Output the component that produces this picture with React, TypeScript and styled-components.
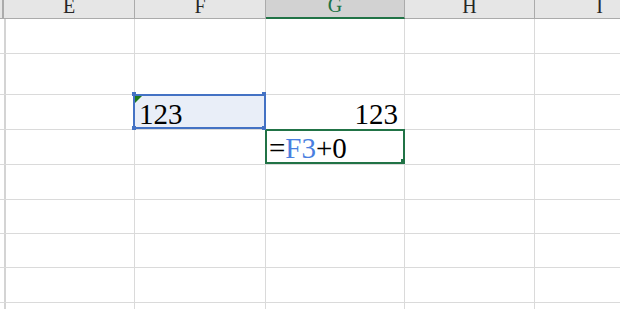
import React from 'react';
import styled, { createGlobalStyle, css } from 'styled-components';

const GlobalStyle = createGlobalStyle`
  html, body {
    margin: 0;
    padding: 0;
    background: #ffffff;
    overflow: hidden;
  }
  * {
    box-sizing: border-box;
  }
`;

const SERIF = `'Liberation Serif', 'DejaVu Serif', 'Times New Roman', serif`;

const COLUMNS = [
  { key: 'D', width: 4 },
  { key: 'E', width: 131 },
  { key: 'F', width: 131 },
  { key: 'G', width: 139 },
  { key: 'H', width: 130 },
  { key: 'I', width: 130 },
];

const ROW_HEIGHTS = [35, 41, 35, 35, 35, 34, 34, 35, 20];

const ACTIVE_COLUMN = 'G';

const Sheet = styled.div`
  display: grid;
  grid-template-columns: ${COLUMNS.map((c) => `${c.width}px`).join(' ')};
  grid-template-rows: 19px ${ROW_HEIGHTS.map((h) => `${h}px`).join(' ')};
  width: 620px;
  height: 309px;
  overflow: hidden;
  font-family: ${SERIF};
  background: #ffffff;
`;

const ColHeader = styled.div<{ $active?: boolean; $edge?: boolean }>`
  display: flex;
  justify-content: center;
  align-items: flex-end;
  padding-bottom: 2px;
  overflow: hidden;
  font-family: ${SERIF};
  font-size: 20px;
  line-height: 20px;
  color: #262626;
  background: #e6e6e6;
  border-right: ${(p) => (p.$edge ? '2px' : '1px')} solid #ababab;
  border-bottom: 1px solid #ababab;

  ${(p) =>
    p.$active &&
    css`
      background: #d2d2d2;
      color: #217346;
      border-bottom: 2px solid #217346;
    `}
`;

const Cell = styled.div<{ $align?: 'left' | 'right'; $edge?: boolean; $fill?: string }>`
  position: relative;
  display: flex;
  align-items: flex-end;
  justify-content: ${(p) => (p.$align === 'right' ? 'flex-end' : 'flex-start')};
  padding: ${(p) => (p.$align === 'right' ? '0 6px 0 0' : '0 0 0 4px')};
  font-family: ${SERIF};
  font-size: 29px;
  line-height: 29px;
  color: #000000;
  white-space: nowrap;
  background: ${(p) => p.$fill ?? 'transparent'};
  border-right: ${(p) => (p.$edge ? '2px solid #d4d4d4' : '1px solid #dadada')};
  border-bottom: 1px solid #dadada;
`;

const RangeFrame = styled.div`
  position: absolute;
  top: -1px;
  left: -2px;
  right: -1px;
  bottom: 0;
  border: 2px solid #4472c4;
  z-index: 2;
  pointer-events: none;
`;

const ActiveFrame = styled.div`
  position: absolute;
  top: -1px;
  left: -1px;
  right: -1px;
  bottom: 0;
  border: 2px solid #217346;
  z-index: 1;
  pointer-events: none;
`;

type Corner = 'tl' | 'tr' | 'bl' | 'br';

const Handle = styled.span<{ $corner: Corner; $color: string }>`
  position: absolute;
  width: 4px;
  height: 4px;
  background: ${(p) => p.$color};
  ${(p) => (p.$corner[0] === 't' ? 'top: -4px;' : 'bottom: -3px;')}
  ${(p) => (p.$corner[1] === 'l' ? 'left: -3px;' : 'right: -2px;')}
`;

const FillHandle = styled.span`
  position: absolute;
  right: -2px;
  bottom: -1px;
  width: 4px;
  height: 4px;
  background: #217346;
`;

const ErrorFlag = styled.span`
  position: absolute;
  top: 1px;
  left: 0;
  width: 0;
  height: 0;
  border-top: 7px solid #1e7b1e;
  border-right: 7px solid transparent;
  z-index: 3;
`;

const CellText = styled.span`
  position: relative;
  z-index: 3;
  font-family: ${SERIF};
`;

const FormulaText = styled(CellText)`
  padding-bottom: 1px;
  margin-left: -1px;
`;

const Ref = styled.span`
  color: #4a7fe0;
`;

interface CellData {
  value: React.ReactNode;
  align?: 'left' | 'right';
  mode?: 'range' | 'active';
  flagged?: boolean;
}

const CELLS: Record<string, CellData> = {
  F3: { value: '123', align: 'left', mode: 'range', flagged: true },
  G3: { value: '123', align: 'right' },
  G4: {
    value: (
      <FormulaText>
        =<Ref>F3</Ref>+0
      </FormulaText>
    ),
    align: 'left',
    mode: 'active',
  },
};

const corners: Corner[] = ['tl', 'tr', 'bl', 'br'];

function SheetCell({ id, edge }: { id: string; edge: boolean }) {
  const data = CELLS[id];
  if (!data) return <Cell $edge={edge} />;

  return (
    <Cell
      $edge={edge}
      $align={data.align}
      $fill={data.mode === 'range' ? '#e9eef8' : undefined}
    >
      {data.flagged && <ErrorFlag />}
      {typeof data.value === 'string' ? <CellText>{data.value}</CellText> : data.value}
      {data.mode === 'range' && (
        <RangeFrame>
          {corners.map((c) => (
            <Handle key={c} $corner={c} $color="#4472c4" />
          ))}
        </RangeFrame>
      )}
      {data.mode === 'active' && (
        <ActiveFrame>
          <FillHandle />
        </ActiveFrame>
      )}
    </Cell>
  );
}

export default function App() {
  return (
    <>
      <GlobalStyle />
      <Sheet>
        {COLUMNS.map((col, i) => (
          <ColHeader key={col.key} $edge={i === 0} $active={col.key === ACTIVE_COLUMN}>
            {i === 0 ? null : col.key}
          </ColHeader>
        ))}
        {ROW_HEIGHTS.map((_, r) =>
          COLUMNS.map((col, i) => (
            <SheetCell key={`${col.key}${r + 1}`} id={`${col.key}${r + 1}`} edge={i === 0} />
          ))
        )}
      </Sheet>
    </>
  );
}
